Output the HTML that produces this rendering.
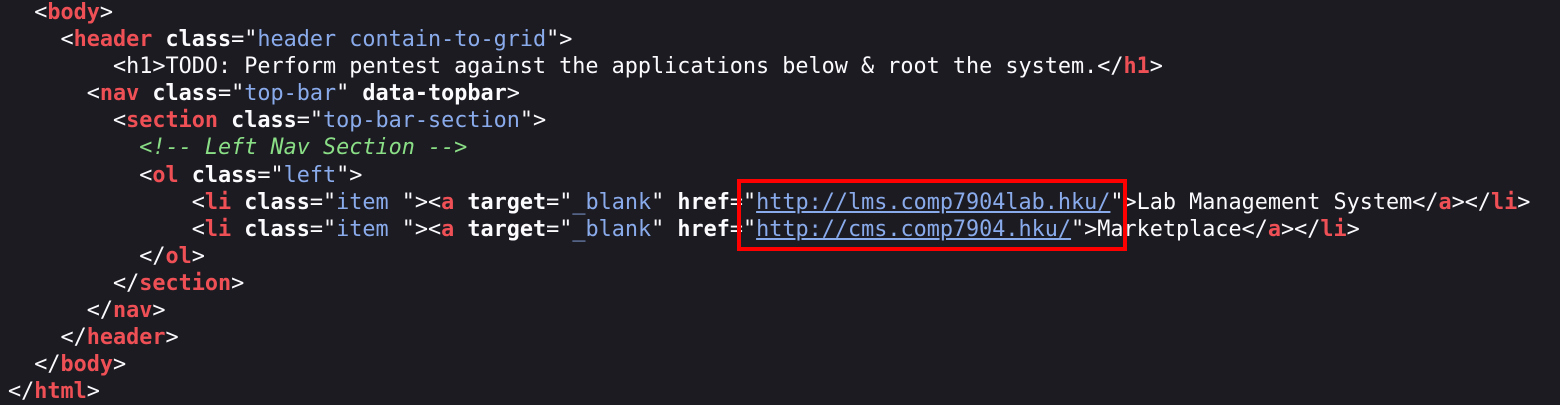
<!DOCTYPE html>
<html><head><style>
html,body{margin:0;padding:0;background:#1c1b22;width:1560px;height:404px;overflow:hidden}
pre{margin:0;position:absolute;left:8px;top:-1px;font-family:"DejaVu Sans Mono","Liberation Mono",monospace;font-size:21.8px;line-height:27.1px;color:#fbfbfe}
.t{font-weight:bold;color:#ee5056}
.a{font-weight:bold}
.v{color:#8aabeb}
.c{color:#8ade86;font-style:italic}
.u{color:#8aabeb;text-decoration:underline}
.box{position:absolute;left:737px;top:179px;width:382px;height:64px;border:4px solid #ff0000}
</style></head><body>
<pre>  &lt;<span class="t">body</span>&gt;
    &lt;<span class="t">header</span> <span class="a">class</span>="<span class="v">header contain-to-grid</span>"&gt;
        &lt;h1&gt;TODO: Perform pentest against the applications below &amp; root the system.&lt;/<span class="t">h1</span>&gt;
      &lt;<span class="t">nav</span> <span class="a">class</span>="<span class="v">top-bar</span>" <span class="a">data-topbar</span>&gt;
        &lt;<span class="t">section</span> <span class="a">class</span>="<span class="v">top-bar-section</span>"&gt;
          <span class="c">&lt;!-- Left Nav Section --&gt;</span>
          &lt;<span class="t">ol</span> <span class="a">class</span>="<span class="v">left</span>"&gt;
              &lt;<span class="t">li</span> <span class="a">class</span>="<span class="v">item </span>"&gt;&lt;<span class="t">a</span> <span class="a">target</span>="<span class="v">_blank</span>" <span class="a">href</span>="<span class="u">http://lms.comp7904lab.hku/</span>"&gt;Lab Management System&lt;/<span class="t">a</span>&gt;&lt;/<span class="t">li</span>&gt;
              &lt;<span class="t">li</span> <span class="a">class</span>="<span class="v">item </span>"&gt;&lt;<span class="t">a</span> <span class="a">target</span>="<span class="v">_blank</span>" <span class="a">href</span>="<span class="u">http://cms.comp7904.hku/</span>"&gt;Marketplace&lt;/<span class="t">a</span>&gt;&lt;/<span class="t">li</span>&gt;
          &lt;/<span class="t">ol</span>&gt;
        &lt;/<span class="t">section</span>&gt;
      &lt;/<span class="t">nav</span>&gt;
    &lt;/<span class="t">header</span>&gt;
  &lt;/<span class="t">body</span>&gt;
&lt;/<span class="t">html</span>&gt;</pre>
<div class="box"></div>
</body></html>
